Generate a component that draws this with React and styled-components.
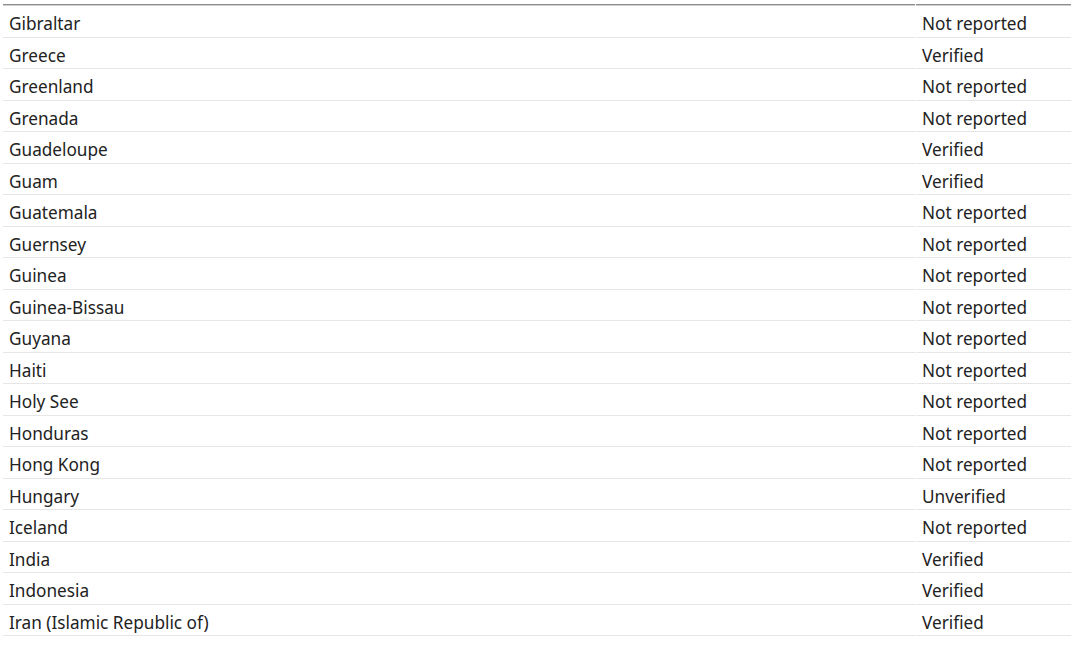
import styled, { createGlobalStyle } from 'styled-components';

const rows = [
  ['Gibraltar', 'Not reported'],
  ['Greece', 'Verified'],
  ['Greenland', 'Not reported'],
  ['Grenada', 'Not reported'],
  ['Guadeloupe', 'Verified'],
  ['Guam', 'Verified'],
  ['Guatemala', 'Not reported'],
  ['Guernsey', 'Not reported'],
  ['Guinea', 'Not reported'],
  ['Guinea-Bissau', 'Not reported'],
  ['Guyana', 'Not reported'],
  ['Haiti', 'Not reported'],
  ['Holy See', 'Not reported'],
  ['Honduras', 'Not reported'],
  ['Hong Kong', 'Not reported'],
  ['Hungary', 'Unverified'],
  ['Iceland', 'Not reported'],
  ['India', 'Verified'],
  ['Indonesia', 'Verified'],
  ['Iran (Islamic Republic of)', 'Verified'],
];

const GlobalStyle = createGlobalStyle`
  body {
    margin: 0;
    background: #fff;
    font-family: "Noto Sans", "Open Sans", sans-serif;
    color: #222;
  }
`;

const Page = styled.div`
  padding: 4px 0 0 3px;
`;

const Table = styled.table`
  width: 1070px;
  border-collapse: separate;
  border-spacing: 1px 0;
  margin-left: -1px;
`;

const HeadCell = styled.th`
  height: 0;
  padding: 0;
  border-top: 1px solid #8c8c8c;
  border-bottom: 1px solid #d0d0d0;
`;

const Row = styled.tr`
  height: 31.5px;
`;

const Cell = styled.td`
  padding: 6px 6px 0;
  box-sizing: border-box;
  border-bottom: 1px solid #e6e6e6;
  font-size: 17.2px;
  line-height: 20px;
  vertical-align: middle;
  white-space: nowrap;
  width: ${({ $w }) => $w || 'auto'};
`;

export default function App() {
  return (
    <Page>
      <GlobalStyle />
      <Table>
        <thead>
          <tr>
            <HeadCell />
            <HeadCell />
          </tr>
        </thead>
        <tbody>
          {rows.map(([country, status]) => (
            <Row key={country}>
              <Cell>{country}</Cell>
              <Cell $w="155px">{status}</Cell>
            </Row>
          ))}
        </tbody>
      </Table>
    </Page>
  );
}
